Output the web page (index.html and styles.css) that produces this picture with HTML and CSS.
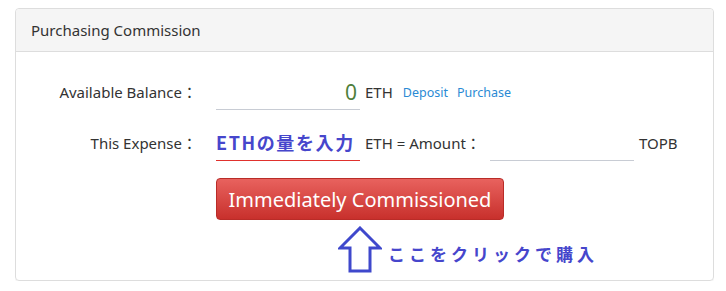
FILE: index.html
```html
<!DOCTYPE html>
<html lang="en">

<head>
  <meta charset="UTF-8">
  <meta name="viewport" content="width=device-width, initial-scale=1.0">
  <title>Purchasing Commission</title>
  <link rel="stylesheet" href="styles.css">
</head>

<body>

  <div class="panel">
    <div class="panel-heading">Purchasing Commission</div>

    <div class="panel-body">
      <div class="form-row">
        <div class="label">Available Balance：</div>
        <div class="field balance">0</div>
        <span class="unit">ETH</span>
        <a class="link" href="#">Deposit</a>
        <a class="link" href="#">Purchase</a>
      </div>

      <div class="form-row">
        <div class="label">This Expense：</div>
        <input class="field eth-input" type="text" placeholder="ETHの量を入力">
        <span class="unit amount-label">ETH = Amount：</span>
        <input class="field" type="text">
        <span class="unit">TOPB</span>
      </div>

      <button class="btn-commission">Immediately Commissioned</button>

      <div class="hint">
        <svg class="arrow" width="44" height="48" viewBox="0 0 44 48">
          <polygon points="22,2 42,22 32,22 32,45 12,45 12,22 2,22" fill="#fff" stroke="#3f48cc" stroke-width="3" stroke-linejoin="miter" />
        </svg>
        <span class="hint-text">ここをクリックで購入</span>
      </div>
    </div>
  </div>

</body>

</html>
```

FILE: styles.css
```css
body {
  font-family: "Noto Sans", "Noto Sans CJK JP", sans-serif;
  background-color: #fff;
  color: #333;
  margin: 8px 12px 0 15px;
}

.panel {
  width: 697px;
  border: 1px solid #ddd;
  border-radius: 4px;
  box-shadow: 0 1px 1px rgba(0, 0, 0, 0.05);
}

.panel-heading {
  height: 42px;
  line-height: 42px;
  padding-left: 15px;
  font-size: 15px;
  background-color: #f5f5f5;
  border-bottom: 1px solid #ddd;
  border-radius: 4px 4px 0 0;
}

.panel-body {
  padding: 24px 0 6px 0;
}

.form-row {
  display: flex;
  align-items: center;
  height: 34px;
  margin-bottom: 17px;
  font-size: 15px;
}

.label {
  width: 181px;
  text-align: right;
  margin-right: 19px;
  margin-bottom: 4px;
}

.field {
  box-sizing: border-box;
  width: 144px;
  height: 34px;
  border: none;
  border-bottom: 1px solid #c8ccd4;
  padding: 0 3px;
  font-family: "Noto Sans", "Noto Sans CJK JP", sans-serif;
  font-size: 15px;
  outline: none;
  background: none;
}

.balance {
  text-align: right;
  font-size: 21px;
  line-height: 32px;
  color: #4f7f3c;
}

.eth-input {
  border-bottom: 1px solid #e0312d;
  padding-left: 0;
}

.eth-input::placeholder {
  font-family: "Noto Sans CJK JP", sans-serif;
  font-size: 18px;
  font-weight: bold;
  letter-spacing: 1.6px;
  color: #4646cc;
  opacity: 1;
}

.unit {
  margin-left: 5px;
  margin-bottom: 3px;
}

.amount-label {
  width: 125px;
}

.link {
  color: #2a8ad4;
  font-size: 12.5px;
  text-decoration: none;
  margin-left: 10px;
  margin-bottom: 2px;
}

.link + .link {
  margin-left: 9px;
}

.btn-commission {
  display: block;
  margin-left: 200px;
  width: 288px;
  height: 42px;
  font-family: "Noto Sans", sans-serif;
  font-size: 20px;
  color: #fff;
  background: linear-gradient(#e8625e, #c8302c);
  border: 1px solid #b92c28;
  border-radius: 4px;
  cursor: pointer;
}

.hint {
  display: flex;
  align-items: center;
  margin: 6px 0 0 322px;
}

.arrow {
  display: block;
}

.hint-text {
  margin-left: 6px;
  margin-top: 6px;
  font-family: "Noto Sans CJK JP", sans-serif;
  font-size: 17px;
  font-weight: bold;
  letter-spacing: 4px;
  color: #4646cc;
}
```
